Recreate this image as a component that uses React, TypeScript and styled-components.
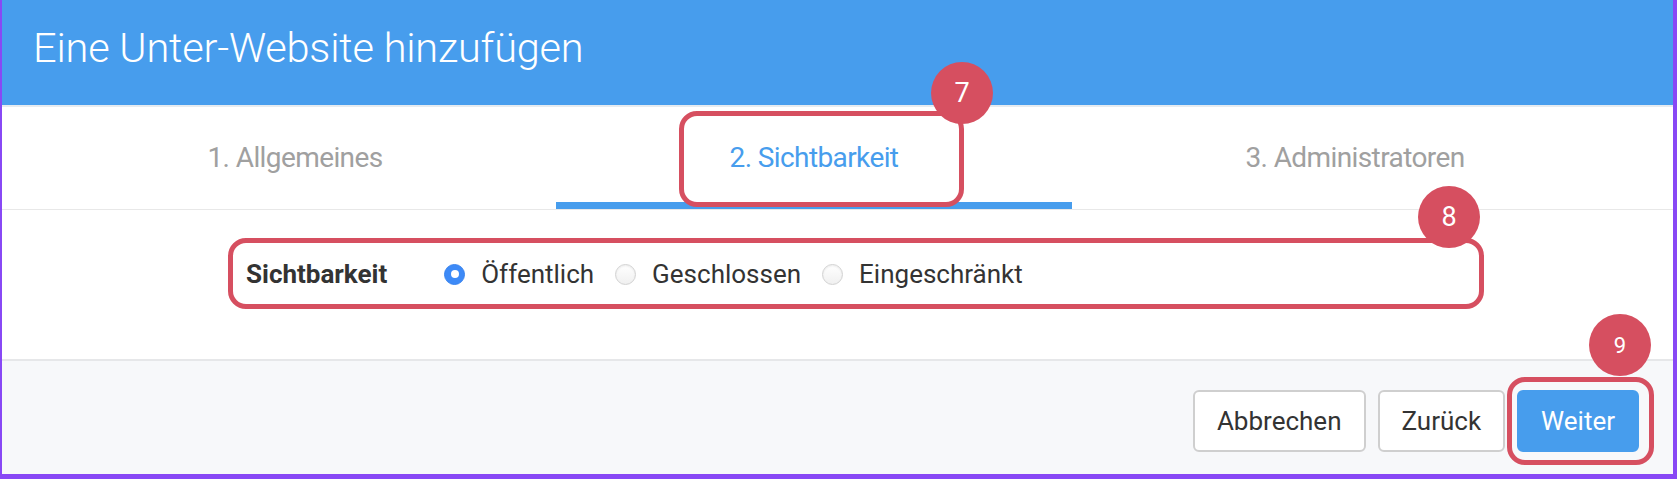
import styled, { createGlobalStyle } from 'styled-components';

const GlobalStyle = createGlobalStyle`
	html, body {
		margin: 0;
		padding: 0;
		background: #ffffff;
	}
	body {
		font-family: Roboto, "Noto Sans", sans-serif;
	}
	* {
		box-sizing: border-box;
	}
`;

const Page = styled.div`
	position: relative;
	width: 1678px;
	height: 486px;
	background: #ffffff;
`;

const Frame = styled.div`
	width: 1677px;
	height: 479px;
	display: flex;
	flex-direction: column;
	border-left: 2px solid #8848f5;
	border-right: 4px solid #8848f5;
	border-bottom: 5px solid #8848f5;
	background: #ffffff;
`;

const Header = styled.div`
	height: 107px;
	display: flex;
	align-items: center;
	padding: 0 0 10px 31px;
	background: #479ded;
	border-bottom: 2px solid #e6ebf0;
`;

const Title = styled.h1`
	margin: 0;
	font-family: Roboto, sans-serif;
	font-weight: 300;
	font-size: 41.5px;
	color: #ffffff;
	letter-spacing: -0.2px;
`;

const TabRow = styled.div`
	height: 103px;
	display: flex;
	padding: 0 35px 0 32px;
	border-bottom: 1px solid #e8e8e8;
`;

const Tab = styled.div<{ $active?: boolean }>`
	flex: 1 1 auto;
	display: flex;
	align-items: center;
	justify-content: center;
	padding-top: 6px;
	font-family: Roboto, sans-serif;
	font-size: 28px;
	letter-spacing: -0.6px;
	color: ${(p) => (p.$active ? '#479ded' : '#a0a0a0')};
	border-bottom: 7px solid ${(p) => (p.$active ? '#479ded' : 'transparent')};
`;

const Content = styled.div`
	height: 151px;
	padding: 44px 0 0 244px;
	border-bottom: 2px solid #e6e7e9;
`;

const FieldRow = styled.div`
	display: flex;
	align-items: center;
	height: 40px;
`;

const FieldLabel = styled.span`
	font-family: Roboto, sans-serif;
	font-weight: 700;
	font-size: 26px;
	color: #333333;
	margin-right: 57px;
`;

const RadioOption = styled.label`
	display: flex;
	align-items: center;
	margin-right: 21px;
	font-family: Roboto, sans-serif;
	font-size: 26px;
	color: #333333;
`;

const RadioCircle = styled.span<{ $checked?: boolean }>`
	width: 21px;
	height: 21px;
	border-radius: 50%;
	margin-right: 16px;
	display: flex;
	align-items: center;
	justify-content: center;
	background: ${(p) =>
		p.$checked ? '#3d8af7' : 'linear-gradient(#ffffff, #f0f0f0)'};
	border: 1px solid ${(p) => (p.$checked ? '#3a84ee' : '#d2d2d2')};
	box-shadow: ${(p) =>
		p.$checked ? 'none' : 'inset 0 1px 2px rgba(0, 0, 0, 0.08)'};

	&::after {
		content: '';
		display: ${(p) => (p.$checked ? 'block' : 'none')};
		width: 8px;
		height: 8px;
		border-radius: 50%;
		background: #ffffff;
	}
`;

const Footer = styled.div`
	flex: 1;
	display: flex;
	justify-content: flex-end;
	align-items: flex-start;
	padding: 29px 34px 0 0;
	background: #f7f8fa;
	gap: 12px;
`;

const Button = styled.button<{ $primary?: boolean }>`
	height: 62px;
	padding: 0 22px;
	border-radius: 6px;
	font-family: Roboto, sans-serif;
	font-size: 26px;
	color: ${(p) => (p.$primary ? '#ffffff' : '#333333')};
	background: ${(p) => (p.$primary ? '#479ded' : '#ffffff')};
	border: 2px solid ${(p) => (p.$primary ? '#479ded' : '#cfcfcf')};
	cursor: pointer;
`;

const Highlight = styled.div<{ $x: number; $y: number; $w: number; $h: number }>`
	position: absolute;
	left: ${(p) => p.$x}px;
	top: ${(p) => p.$y}px;
	width: ${(p) => p.$w}px;
	height: ${(p) => p.$h}px;
	border: 5px solid #d64f60;
	border-radius: 18px;
	pointer-events: none;
`;

const Badge = styled.div<{ $x: number; $y: number; $size?: number }>`
	position: absolute;
	left: ${(p) => p.$x - 31}px;
	top: ${(p) => p.$y - 31}px;
	width: 62px;
	height: 62px;
	border-radius: 50%;
	background: #d64f60;
	color: #ffffff;
	display: flex;
	align-items: center;
	justify-content: center;
	font-family: Roboto, sans-serif;
	font-size: ${(p) => p.$size ?? 27}px;
`;

const options = [
	{ label: 'Öffentlich', checked: true },
	{ label: 'Geschlossen', checked: false },
	{ label: 'Eingeschränkt', checked: false },
];

export default function App(): JSX.Element {
	return (
		<Page>
			<GlobalStyle />
			<Frame>
				<Header>
					<Title>Eine Unter-Website hinzufügen</Title>
				</Header>
				<TabRow>
					<Tab>1. Allgemeines</Tab>
					<Tab $active>2. Sichtbarkeit</Tab>
					<Tab>3. Administratoren</Tab>
				</TabRow>
				<Content>
					<FieldRow>
						<FieldLabel>Sichtbarkeit</FieldLabel>
						{options.map((o) => (
							<RadioOption key={o.label}>
								<RadioCircle $checked={o.checked} />
								{o.label}
							</RadioOption>
						))}
					</FieldRow>
				</Content>
				<Footer>
					<Button>Abbrechen</Button>
					<Button>Zurück</Button>
					<Button $primary>Weiter</Button>
				</Footer>
			</Frame>

			{/* annotations */}
			<Highlight $x={679} $y={111} $w={285} $h={96} />
			<Badge $x={962} $y={93}>7</Badge>
			<Highlight $x={228} $y={238} $w={1256} $h={71} />
			<Badge $x={1449} $y={217}>8</Badge>
			<Highlight $x={1507} $y={377} $w={147} $h={88} />
			<Badge $x={1620} $y={345} $size={22}>9</Badge>
		</Page>
	);
}
